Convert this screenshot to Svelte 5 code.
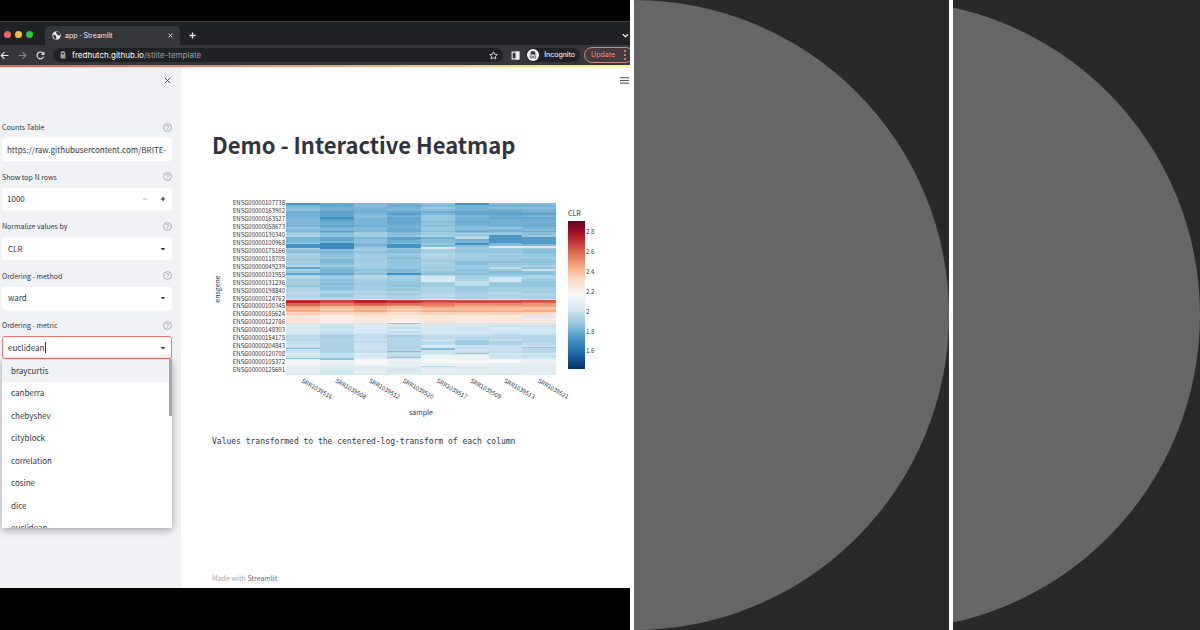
<script lang="ts">
  type Band = [col: number, y: number, h: number, t: number];

  const DISTANCES = [
    "braycurtis",
    "canberra",
    "chebyshev",
    "cityblock",
    "correlation",
    "cosine",
    "dice",
    "euclidean",
  ];

  const SAMPLES = [
    "SRR1039516",
    "SRR1039508",
    "SRR1039512",
    "SRR1039520",
    "SRR1039517",
    "SRR1039509",
    "SRR1039513",
    "SRR1039521",
  ];

  const GENES = [
    "ENSG00000107738",
    "ENSG00000163902",
    "ENSG00000163527",
    "ENSG00000058673",
    "ENSG00000130340",
    "ENSG00000100968",
    "ENSG00000175166",
    "ENSG00000118705",
    "ENSG00000049239",
    "ENSG00000101955",
    "ENSG00000131236",
    "ENSG00000198840",
    "ENSG00000124762",
    "ENSG00000100345",
    "ENSG00000185624",
    "ENSG00000122786",
    "ENSG00000148303",
    "ENSG00000154175",
    "ENSG00000204843",
    "ENSG00000120708",
    "ENSG00000105372",
    "ENSG00000125691",
  ];

  const TICKS = ["2.8", "2.6", "2.4", "2.2", "2", "1.8", "1.6"];

  // RdBu, reversed
  const SCALE = [
    [5, 48, 97],
    [33, 102, 172],
    [67, 147, 195],
    [146, 197, 222],
    [209, 229, 240],
    [247, 247, 247],
    [253, 219, 199],
    [244, 165, 130],
    [214, 96, 77],
    [178, 24, 43],
    [103, 0, 31],
  ];

  // [y, level] steps from the top of the map downwards
  const PROFILE = [
    [0, 0.27],
    [8, 0.26],
    [20, 0.27],
    [29, 0.31],
    [34, 0.27],
    [44, 0.3],
    [50, 0.31],
    [66, 0.29],
    [72, 0.35],
    [76, 0.31],
    [84, 0.33],
    [94, 0.35],
    [96, 0.42],
    [97, 0.88],
    [100, 0.77],
    [103, 0.68],
    [105, 0.65],
    [107, 0.68],
    [109, 0.61],
    [112, 0.54],
    [117, 0.56],
    [120, 0.41],
    [123, 0.4],
    [131, 0.37],
    [140, 0.38],
    [150, 0.4],
    [156, 0.47],
    [163, 0.44],
  ];

  const BANDS: Band[] = [
    [0, 0, 2, 0.2],
    [0, 41, 4, 0.2],
    [0, 64, 2, 0.24],
    [0, 70, 2, 0.23],
    [0, 145, 1, 0.28],
    [0, 155, 1, 0.29],
    [1, 14, 2, 0.2],
    [1, 40, 6, 0.18],
    [1, 70, 2, 0.24],
    [1, 134, 16, 0.34],
    [1, 155, 2, 0.3],
    [2, 41, 2, 0.26],
    [2, 156, 4, 0.5],
    [3, 34, 3, 0.23],
    [3, 41, 4, 0.2],
    [3, 70, 2, 0.19],
    [3, 120, 1, 0.3],
    [3, 134, 10, 0.35],
    [3, 148, 1, 0.28],
    [3, 154, 1, 0.3],
    [4, 12, 6, 0.31],
    [4, 44, 2, 0.43],
    [4, 73, 6, 0.42],
    [4, 139, 1, 0.34],
    [4, 145, 2, 0.28],
    [4, 152, 4, 0.48],
    [4, 163, 1, 0.36],
    [5, 0, 2, 0.2],
    [5, 33, 3, 0.35],
    [5, 40, 2, 0.2],
    [5, 78, 5, 0.38],
    [5, 137, 5, 0.32],
    [5, 150, 1, 0.3],
    [5, 152, 6, 0.48],
    [6, 32, 8, 0.21],
    [6, 43, 2, 0.43],
    [6, 64, 2, 0.37],
    [6, 74, 5, 0.4],
    [6, 138, 4, 0.34],
    [7, 34, 7, 0.22],
    [7, 43, 2, 0.42],
    [7, 66, 2, 0.39],
    [7, 113, 2, 0.42],
    [7, 132, 8, 0.35],
    [7, 144, 1, 0.3],
  ];

  // some samples sit a little lower or higher overall
  const SHIFT = [0.01, -0.02, 0.01, -0.015, 0.015, 0, 0, -0.005];

  const COLUMN_WIDTH = 270 / 8;
  const MAP_HEIGHT = 172;

  function noise(a: number, b: number) {
    const n = Math.sin(a * 127.1 + b * 311.7) * 43758.5453;
    return n - Math.floor(n) - 0.5;
  }

  function colour(t: number) {
    const p = Math.min(Math.max(t, 0), 0.999) * 10;
    const i = Math.floor(p);
    const mix = SCALE[i].map((c, k) =>
      Math.round(c + (SCALE[i + 1][k] - c) * (p - i)),
    );
    return `rgb(${mix.join(",")})`;
  }

  function level(col: number, y: number) {
    const band = BANDS.find((b) => b[0] === col && y >= b[1] && y < b[1] + b[2]);
    if (band) return band[3];
    const step = PROFILE.filter((p) => p[0] <= y).at(-1)!;
    let t = step[1] + SHIFT[col];
    // the strongest genes fade towards the last samples
    if (y >= 97 && y < 103 && col > 3) t -= 0.05;
    t += noise(Math.floor(y / 2), 3) * 0.03;
    t += noise(Math.floor(y / 2), col + 11) * 0.035;
    return t;
  }

  const cells = SAMPLES.flatMap((_, col) =>
    Array.from({ length: MAP_HEIGHT }, (_, y) => ({
      x: 74 + col * COLUMN_WIDTH,
      y: 8 + y,
      fill: colour(level(col, y)),
    })),
  );

  let counts = $state("https://raw.githubusercontent.com/BRITE-");
  let rows = $state("1000");
  let normalize = $state("CLR");
  let method = $state("ward");
  let metric = $state("euclidean");
</script>

{#snippet help(topic: string)}
  <button class="help" aria-label="Help: {topic}">
    <svg viewBox="0 0 16 16">
      <circle cx="8" cy="8" r="7" />
      <path d="M5.8 6.4a2.2 2.2 0 1 1 3.3 1.9c-.8.4-1.1.8-1.1 1.5M8 11.4v1" />
    </svg>
  </button>
{/snippet}

{#snippet arrow()}
  <svg class="arrow" viewBox="0 0 8 8" aria-hidden="true">
    <path d="M1 2.5h6L4 6z" />
  </svg>
{/snippet}

{#snippet disc()}
  <svg class="disc" viewBox="0 0 630 630" preserveAspectRatio="xMaxYMid slice" aria-hidden="true">
    <circle cx="315" cy="315" r="315" />
  </svg>
{/snippet}

<div class="gallery">
  <section class="shot">
    <div class="browser">
      <div class="tabs">
        <div class="lights"><i class="red"></i><i class="amber"></i><i class="green"></i></div>
        <div class="tab">
          <svg class="icon" viewBox="0 0 16 16">
            <circle cx="8" cy="8" r="7.5" fill="#e8eaed" />
            <path d="M2 6l3 1 2 2v2l1 2-1 2-4-3zM8 1l-1 3 2 1 1 2 3 1 2-2-2-4z" fill="#35363a" />
          </svg>
          <span>app · Streamlit</span>
          <button class="tab-close" aria-label="Close tab">
            <svg class="tiny" viewBox="0 0 8 8"><path d="M1 1l6 6M7 1L1 7" /></svg>
          </button>
        </div>
        <button class="new-tab" aria-label="New tab">
          <svg class="small" viewBox="0 0 8 8"><path d="M4 .5v7M.5 4h7" /></svg>
        </button>
        <button class="tab-menu" aria-label="Search tabs">
          <svg class="small" viewBox="0 0 8 8"><path d="M1 2.5l3 3 3-3" /></svg>
        </button>
      </div>

      <div class="toolbar">
        <div class="nav">
          <button aria-label="Back">
            <svg class="icon" viewBox="0 0 16 16"><path d="M15 8H2M8 2L2 8l6 6" /></svg>
          </button>
          <button class="dim" aria-label="Forward">
            <svg class="icon" viewBox="0 0 16 16"><path d="M1 8h13M8 2l6 6-6 6" /></svg>
          </button>
          <button aria-label="Reload">
            <svg class="icon" viewBox="0 0 16 16">
              <path d="M13.5 10A6 6 0 1 1 12.5 4" />
              <path class="solid" d="M15 1v6H9z" />
            </svg>
          </button>
        </div>
        <div class="address">
          <svg class="lock" viewBox="0 0 8 8">
            <path d="M1.5 3.5h5v4h-5z" />
            <path class="shackle" d="M2.5 4V2.2a1.5 1.5 0 0 1 3 0V4" />
          </svg>
          <a href="#app">fredhutch.github.io<span>/stlite-template</span></a>
          <button class="star" aria-label="Bookmark">
            <svg class="icon" viewBox="0 0 16 16">
              <path d="M8 1.5l2 4.3 4.7.5-3.5 3.2 1 4.7L8 11.8l-4.2 2.4 1-4.7L1.3 6.3 6 5.8z" />
            </svg>
          </button>
        </div>
        <button class="side" aria-label="Side panel">
          <svg class="icon" viewBox="0 0 16 16">
            <path d="M2 2h12v12H2z" /><path class="solid" d="M9 2h5v12H9z" />
          </svg>
        </button>
        <div class="incognito">
          <svg viewBox="0 0 24 24">
            <circle cx="12" cy="12" r="12" fill="#fff" />
            <path d="M8.5 5.5l1-1.5 2.5.8 2.5-.8 1 1.5 1 4.5h-9zM4.5 11.5h15" fill="#35363a" stroke="#35363a" />
            <g fill="none" stroke="#35363a" stroke-width="1.5">
              <circle cx="8.5" cy="16" r="2.5" /><circle cx="15.5" cy="16" r="2.5" /><path d="M11 15.5h2" />
            </g>
          </svg>
          <span>Incognito</span>
        </div>
        <button class="update">
          <span>Update</span>
          <svg viewBox="0 0 4 12"><circle cx="2" cy="2" r="1" /><circle cx="2" cy="6" r="1" /><circle cx="2" cy="10" r="1" /></svg>
        </button>
      </div>

      <div class="decoration"></div>
      <div class="page">
        <aside>
          <button class="close" aria-label="Close sidebar">
            <svg class="small" viewBox="0 0 8 8"><path d="M1 1l6 6M7 1L1 7" /></svg>
          </button>

          <div class="fields">
            <div class="field">
              <div class="label"><label for="counts">Counts Table</label>{@render help("Counts Table")}</div>
              <div class="box"><input id="counts" type="text" bind:value={counts} /></div>
            </div>
            <div class="field">
              <div class="label"><label for="rows">Show top N rows</label>{@render help("Show top N rows")}</div>
              <div class="box">
                <input id="rows" type="text" inputmode="numeric" bind:value={rows} />
                <button class="step off" aria-label="Decrease">
                  <svg viewBox="0 0 8 8"><path d="M1 4h6" /></svg>
                </button>
                <button class="step" aria-label="Increase">
                  <svg viewBox="0 0 8 8"><path d="M1 4h6M4 1v6" /></svg>
                </button>
              </div>
            </div>
            <div class="field">
              <div class="label"><label for="normalize">Normalize values by</label>{@render help("Normalize values by")}</div>
              <div class="box pick">
                <select id="normalize" bind:value={normalize}><option>CLR</option></select>
                {@render arrow()}
              </div>
            </div>
            <div class="field">
              <div class="label"><label for="method">Ordering - method</label>{@render help("Ordering - method")}</div>
              <div class="box pick">
                <select id="method" bind:value={method}><option>ward</option></select>
                {@render arrow()}
              </div>
            </div>
            <div class="field">
              <div class="label"><label for="metric">Ordering - metric</label>{@render help("Ordering - metric")}</div>
              <div class="box pick open">
                <input
                  id="metric"
                  type="text"
                  role="combobox"
                  aria-expanded="true"
                  aria-controls="distances"
                  bind:value={metric}
                />
                <span class="caret"></span>
                {@render arrow()}
                <div class="menu">
                  <ul id="distances" role="listbox">
                    {#each DISTANCES as name, i}
                      <li role="option" aria-selected={i === 0}>{name}</li>
                    {/each}
                  </ul>
                  <div class="thumb"></div>
                </div>
              </div>
            </div>
          </div>
        </aside>

        <main>
          <button class="burger" aria-label="Menu">
            <svg viewBox="0 0 10 8"><path d="M0 1.5h10M0 4.5h10M0 7.5h10" /></svg>
          </button>
          <h1>Demo - Interactive Heatmap</h1>

          <svg class="chart" viewBox="0 0 388 230" role="img" aria-label="Heatmap of CLR by gene and sample">
            <defs>
              <linearGradient id="scale" x1="0" y1="1" x2="0" y2="0">
                {#each SCALE as c, i}
                  <stop offset={i / 10} stop-color="rgb({c.join(',')})" />
                {/each}
              </linearGradient>
            </defs>
            <g shape-rendering="crispEdges">
              {#each cells as cell}
                <rect x={cell.x} y={cell.y} width={COLUMN_WIDTH} height="1" fill={cell.fill} />
              {/each}
            </g>
            <g class="tick" text-anchor="end">
              {#each GENES as gene, i}
                <text x="73" y={10 + i * 7.96}>{gene}</text>
              {/each}
            </g>
            <g class="tick">
              {#each SAMPLES as sample, i}
                <text transform="translate({89 + i * COLUMN_WIDTH} 187) rotate(30)">{sample}</text>
              {/each}
              {#each TICKS as tick, i}
                <text x="374" y={39 + i * 19.9}>{tick}</text>
              {/each}
            </g>
            <rect x="356" y="26" width="17" height="148" fill="url(#scale)" />
            <g class="axis">
              <text x="356" y="21">CLR</text>
              <text x="209" y="220" text-anchor="middle">sample</text>
              <text transform="translate(8 94) rotate(-90)" text-anchor="middle">ensgene</text>
            </g>
          </svg>

          <p class="note">Values transformed to the centered-log-transform of each column</p>
          <footer>Made with <a href="#app">Streamlit</a></footer>
        </main>
      </div>
    </div>
  </section>
  <section class="tile">{@render disc()}</section>
  <section class="tile">{@render disc()}</section>
</div>

<style>
  :global(body) {
    background: #fff;
  }

  .gallery {
    display: grid;
    grid-template-columns: 630fr 315fr 247fr;
    gap: 4px;
    height: 100vh;
    overflow: hidden;
    font-family: "Noto Sans CJK SC", "Noto Sans", sans-serif;
    color: #31333f;
  }

  .gallery * {
    box-sizing: border-box;
  }

  button {
    display: flex;
    align-items: center;
    padding: 0;
    border: 0;
    background: none;
    color: inherit;
    font: inherit;
  }

  svg {
    display: block;
    flex-shrink: 0;
  }

  .tile {
    background: #292929;
    overflow: hidden;
  }

  .disc {
    width: 100%;
    height: 100%;
    fill: #666;
  }

  .shot {
    display: flex;
    min-width: 0;
    padding: 21px 0 42px;
    background: #000;
    overflow: hidden;
  }

  .browser {
    display: flex;
    flex: 1;
    flex-direction: column;
    min-width: 0;
    background: #202124;
  }

  .icon {
    width: 9px;
    height: 9px;
  }

  .small {
    width: 7px;
    height: 7px;
  }

  .tiny {
    width: 5px;
    height: 5px;
  }

  .icon,
  .small,
  .tiny {
    fill: none;
    stroke: currentColor;
    stroke-width: 1;
  }

  .tabs .small,
  .tiny {
    stroke-width: 1.5;
  }

  .tabs,
  .toolbar {
    display: flex;
    align-items: center;
    flex-shrink: 0;
    font-family: Inter, "Liberation Sans", sans-serif;
    font-size: 7px;
    line-height: 12px;
    color: #e8eaed;
  }

  .tabs {
    height: 24px;
    padding: 4px 1px 0 4px;
    border-top: 1px solid #3c3d40;
  }

  .tab svg circle,
  .tab .icon path {
    stroke: none;
  }

  .lights {
    display: flex;
    gap: 4px;
    width: 41px;
    padding-bottom: 3px;
  }

  .lights i {
    width: 7px;
    height: 7px;
    border-radius: 50%;
  }

  .red {
    background: #fe5f57;
  }

  .amber {
    background: #febb2e;
  }

  .green {
    background: #28c840;
  }

  .tab {
    display: flex;
    align-items: center;
    gap: 4px;
    width: 135px;
    height: 19px;
    padding: 0 7px;
    border-radius: 5px 5px 0 0;
    background: #35363a;
  }

  .tab-close {
    margin-left: auto;
  }

  .new-tab {
    margin-left: 9px;
  }

  .tab-menu {
    margin-left: auto;
  }

  .toolbar {
    height: 20px;
    background: #35363a;
    overflow: hidden;
  }

  .nav {
    display: flex;
    gap: 9px;
  }

  .nav svg {
    stroke-width: 2;
  }

  .nav .solid {
    fill: currentColor;
    stroke: none;
  }

  .dim {
    color: #85868a;
  }

  .address {
    display: flex;
    flex: 1;
    align-items: center;
    gap: 5px;
    height: 14px;
    margin-left: 8px;
    padding: 0 5px 0 6px;
    border-radius: 7px;
    background: #202124;
  }

  .address svg {
    stroke-width: 1.5;
  }

  .address a {
    color: #fff;
    font-size: 8px;
    text-decoration: none;
  }

  .address a span {
    color: #9aa0a6;
  }

  .lock {
    width: 8px;
    height: 8px;
    fill: #9aa0a6;
  }

  .shackle {
    fill: none;
    stroke: #9aa0a6;
  }

  .star {
    margin-left: auto;
  }

  .side {
    margin: 0 6px 0 8px;
  }

  .side svg {
    stroke-width: 2;
  }

  .side .solid {
    fill: currentColor;
  }

  .incognito {
    display: flex;
    align-items: center;
    gap: 5px;
    height: 14px;
    padding: 0 5px 0 1px;
    border-radius: 7px;
    background: #202124;
    color: #fff;
  }

  .incognito svg {
    width: 12px;
    height: 12px;
  }

  .update {
    gap: 8px;
    height: 16px;
    margin: 0 -4px 0 4px;
    padding: 0 6px;
    border: 1px solid #c98e86;
    border-radius: 8px;
    background: #423a3b;
    color: #f28b82;
  }

  .update svg {
    width: 4px;
    height: 12px;
    fill: #f28b82;
  }

  .decoration {
    flex-shrink: 0;
    height: 2px;
    background: linear-gradient(90deg, #ee5a55, #e9a07a 50%, #fffd80);
  }

  .page {
    display: flex;
    flex: 1;
    min-height: 0;
    background: #fff;
  }

  aside {
    width: 181px;
    flex-shrink: 0;
    padding: 10px 9px 0 2px;
    background: #f0f2f6;
  }

  .close {
    margin: 0 1px 37px auto;
  }

  .fields {
    display: grid;
    grid-auto-rows: 1fr;
    height: 248px;
  }

  .label {
    display: flex;
    align-items: center;
    justify-content: space-between;
    height: 12px;
    margin-bottom: 5px;
    font-size: 7px;
    line-height: 12px;
  }

  .help svg {
    width: 9px;
    height: 9px;
    fill: none;
    stroke: #9698a0;
    stroke-width: 1.3;
  }

  .box {
    position: relative;
    display: flex;
    align-items: center;
    height: 23px;
    padding: 0 5px 0 4px;
    border: 1px solid transparent;
    border-radius: 3px;
    background: #fff;
  }

  .box input,
  .box select {
    flex: 1;
    min-width: 0;
    padding: 0;
    border: 0;
    outline: 0;
    appearance: none;
    background: none;
    color: #31333f;
    font-family: inherit;
    font-size: 8px;
    line-height: 16px;
  }

  .pick {
    padding: 0 5px;
  }

  .box.open {
    border-color: #f0706c;
  }

  .open input {
    flex: none;
    field-sizing: content;
  }

  .caret {
    width: 1px;
    height: 11px;
    background: #31333f;
  }

  .step svg {
    width: 6px;
    height: 6px;
    stroke: #31333f;
    stroke-width: 1.5;
  }

  .off {
    margin-right: 12px;
    opacity: 0.3;
  }

  .arrow {
    width: 6px;
    height: 6px;
    margin-left: auto;
    fill: #31333f;
  }

  .menu {
    position: absolute;
    top: 22px;
    left: -1px;
    right: -1px;
    height: 169px;
    overflow: hidden;
    background: #fff;
    box-shadow: 0 2px 8px rgba(0, 0, 0, 0.35);
  }

  ul {
    display: grid;
    grid-auto-rows: 1fr;
    height: 180px;
    margin: 0;
    padding: 0;
    list-style: none;
  }

  li {
    display: flex;
    align-items: center;
    padding-left: 9px;
    font-size: 8px;
    line-height: 16px;
  }

  li[aria-selected="true"] {
    background: #f0f2f6;
  }

  .thumb {
    position: absolute;
    top: 0;
    right: 0;
    width: 3px;
    height: 57px;
    background: #a6a8ae;
  }

  main {
    display: flex;
    flex: 1;
    flex-direction: column;
    min-width: 0;
    padding: 9px 0 4px 31px;
  }

  .burger {
    margin: 0 1px 0 auto;
  }

  .burger svg {
    width: 9px;
    height: 8px;
    stroke: #31333f;
  }

  h1 {
    margin: 44px 0 35px;
    font-size: 22px;
    font-weight: 700;
    line-height: 32px;
  }

  .chart {
    width: 388px;
    max-width: 100%;
  }

  .chart text {
    fill: #31333f;
  }

  .tick {
    font-size: 6px;
  }

  .axis {
    font-size: 7px;
  }

  .note {
    margin: 11px 0 0;
    font-family: "DejaVu Sans Mono", "Liberation Mono", monospace;
    font-size: 8px;
    line-height: 12px;
  }

  footer {
    margin-top: auto;
    color: #a3a5ab;
    font-size: 7px;
    line-height: 12px;
  }

  footer a {
    color: #6b6d78;
    text-decoration: none;
  }
</style>
